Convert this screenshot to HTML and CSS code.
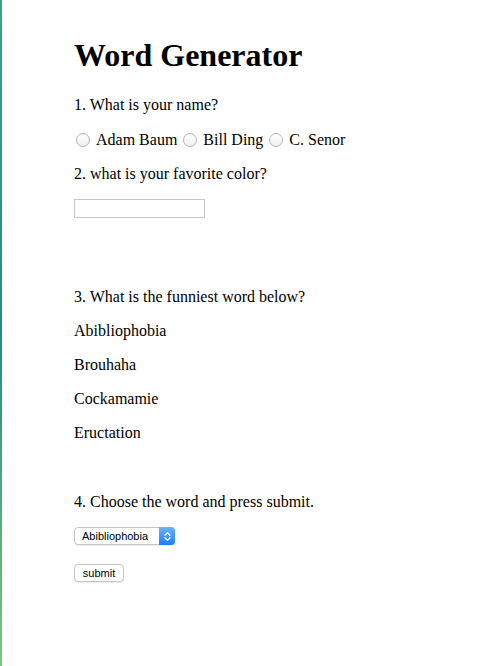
FILE: index.html
```html
<!DOCTYPE html>
<html>
<head>
<meta charset="utf-8">
<title>Word Generator</title>
<link rel="stylesheet" href="styles.css">
</head>
<body>
<main class="page">
  <h1 class="title">Word Generator</h1>
  <p class="q">1. What is your name?</p>
  <p class="radios">
    <input type="radio" name="n" class="radio"> Adam Baum
    <input type="radio" name="n" class="radio"> Bill Ding
    <input type="radio" name="n" class="radio"> C. Senor
  </p>
  <p class="q">2. what is your favorite color?</p>
  <div class="field"><input type="text" class="text-input"></div>
  <p class="q q3">3. What is the funniest word below?</p>
  <p class="q">Abibliophobia</p>
  <p class="q">Brouhaha</p>
  <p class="q">Cockamamie</p>
  <p class="q">Eructation</p>
  <p class="q q4">4. Choose the word and press submit.</p>
  <div class="field field-select">
    <span class="select-wrap">
      <select class="select">
        <option>Abibliophobia</option>
        <option>Brouhaha</option>
        <option>Cockamamie</option>
        <option>Eructation</option>
      </select>
      <span class="select-arrow">
        <svg width="15" height="17" viewBox="0 0 15 17"><path d="M5 7.2 L7.5 4.8 L10 7.2 M5 9.8 L7.5 12.2 L10 9.8" fill="none" stroke="#fff" stroke-width="1.3" stroke-linecap="round" stroke-linejoin="round"/></svg>
      </span>
    </span>
  </div>
  <div class="field field-btn"><button class="btn">submit</button></div>
</main>
</body>
</html>
```
FILE: styles.css
```css
html, body { margin: 0; padding: 0; background: #fff; }
body {
  min-height: 666px;
  box-sizing: border-box;
  border-left: 2px solid #3a9c82;
  border-image: linear-gradient(to bottom, #3da285, #2b8a80 50%, #7cc77a) 1;
  font-family: "Liberation Serif", "Times New Roman", serif;
  font-size: 16px;
  color: #000;
}
.page { padding: 16px 0 40px 72px; }
.title {
  font-size: 32px;
  font-weight: bold;
  margin: 21px 0 22px;
  line-height: 37px;
}
.q { margin: 16px 0; line-height: 18px; }
.radios { margin: 16px 0; height: 19px; display: flex; align-items: center; }
.radio {
  -webkit-appearance: none;
  appearance: none;
  width: 14px;
  height: 14px;
  margin: 0 6px 0 6px;
  border: 1px solid #b4b4b4;
  border-radius: 50%;
  background: linear-gradient(#fff, #f0f0f0);
  box-sizing: border-box;
}
.radio:first-child { margin-left: 2px; }
.field { margin: 16px 0; display: flex; }
.text-input {
  width: 131px;
  height: 19px;
  box-sizing: border-box;
  border: 1px solid #c8c8c8;
  padding: 0 2px;
  margin: 0;
  font-size: 12px;
  outline: none;
}
.q3 { margin-top: 70px; }
.q4 { margin-top: 51px; }
.field-select { margin-top: 16px; }
.field-btn { margin-top: 19px; }
.select-wrap { position: relative; display: block; }
.select {
  -webkit-appearance: none;
  appearance: none;
  display: block;
  width: 101px;
  height: 18px;
  box-sizing: border-box;
  border: 1px solid #c6c6c6;
  border-radius: 4px;
  background: #fff;
  font-family: "Liberation Sans", Arial, sans-serif;
  font-size: 11px;
  padding: 0 18px 0 7px;
  margin: 0;
  color: #000;
  box-shadow: 0 1px 1px rgba(0,0,0,0.08);
}
.select-arrow {
  position: absolute;
  right: 0;
  top: 0;
  width: 16px;
  height: 18px;
  border-radius: 0 4px 4px 0;
  background: linear-gradient(#6db4fb, #1c7ef8);
  display: flex;
  align-items: center;
  justify-content: center;
}
.btn {
  display: block;
  width: 50px;
  height: 18px;
  margin: 0;
  padding: 0;
  border: 1px solid #c6c6c6;
  border-radius: 4px;
  background: #fff;
  font-family: "Liberation Sans", Arial, sans-serif;
  font-size: 11px;
  color: #000;
  box-shadow: 0 1px 1px rgba(0,0,0,0.08);
}
```
